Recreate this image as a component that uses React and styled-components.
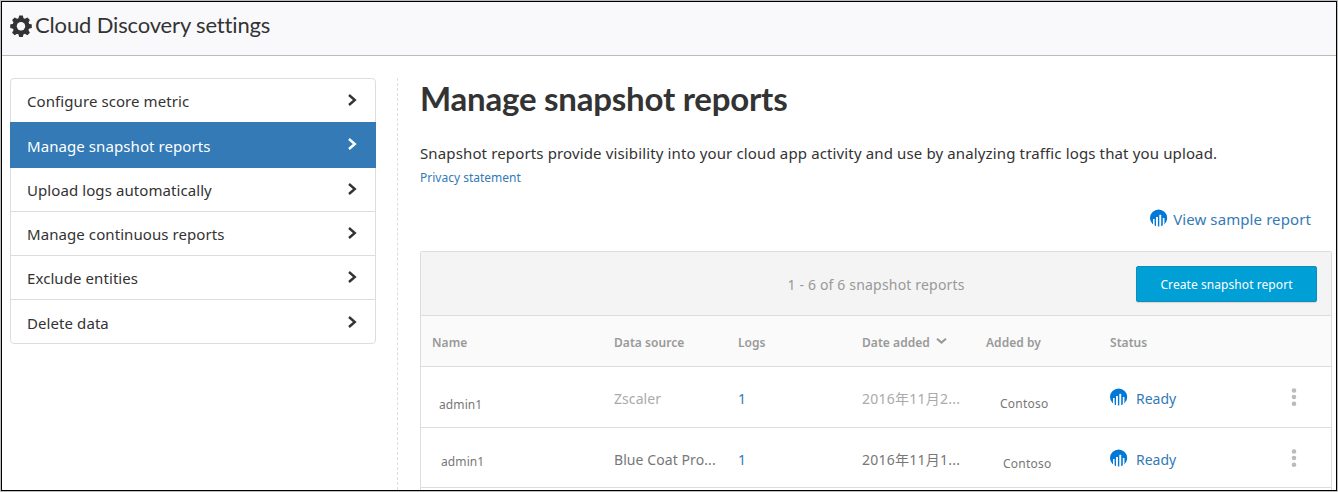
import React from "react";
import styled, { createGlobalStyle } from "styled-components";

const GlobalStyle = createGlobalStyle`
  * { box-sizing: border-box; }
  body { margin: 0; background: #fff; }
`;

const Frame = styled.div`
  width: 1338px;
  height: 492px;
  border: 1px solid #bdbdbd;
  font-family: "Noto Sans", "Noto Sans CJK SC", sans-serif;
  font-size: 15px;
  color: #333;
`;

const Page = styled.div`
  height: 490px;
  border: 1px solid #000;
  overflow: hidden;
  background: #fff;
`;

const Header = styled.header`
  height: 54px;
  display: flex;
  align-items: flex-start;
  padding: 13px 0 0 8px;
  gap: 3px;
  background: #f9f9fc;
  border-bottom: 1px solid #bbb;
`;

const Title = styled.div`
  margin-top: -1px;
  font: 400 22px/22px Lato, sans-serif;
  font-variant-ligatures: none;
  white-space: nowrap;
  letter-spacing: -0.15px;
`;

const Body = styled.div`
  display: flex;
  padding: 22px 4px 0 8px;
  height: 434px;
`;

const Menu = styled.nav`
  width: 366px;
  height: 266px;
  border: 1px solid #ddd;
  border-radius: 4px;
`;

const MenuItem = styled.div`
  display: flex;
  align-items: center;
  justify-content: space-between;
  height: ${(p) => p.$h}px;
  margin: 0 ${(p) => (p.$active ? -1 : 0)}px;
  padding: ${(p) => p.$top || 1}px ${(p) => (p.$active ? 19 : 18)}px 0 ${(p) => (p.$active ? 17 : 16)}px;
  color: ${(p) => (p.$active ? "#fff" : "#333")};
  background: ${(p) => (p.$active ? "#337ab7" : "transparent")};
  border-bottom: ${(p) => (p.$line ? "1px solid #ddd" : "0")};
  line-height: 20px;
  letter-spacing: 0.08px;

  svg { margin-top: -3px; }
`;

const Divider = styled.div`
  width: 1px;
  margin-left: 21px;
  border-left: 1px dashed #ddd;
`;

const Main = styled.main`
  flex: 1;
  margin-left: 22px;
  display: flex;
  flex-direction: column;
`;

const Heading = styled.h1`
  margin: 1px 0 0;
  font: 700 33px/38px Lato, sans-serif;
  letter-spacing: -0.22px;
`;

const Intro = styled.p`
  margin: 26px 0 0;
  line-height: 20px;
  white-space: nowrap;
  letter-spacing: 0.135px;
`;

const Privacy = styled.a`
  margin-top: 6px;
  font-size: 12px;
  line-height: 18px;
  color: #337ab7;
`;

const SampleLink = styled.a`
  display: flex;
  justify-content: flex-end;
  align-items: center;
  gap: 5px;
  margin: 22px 21px 0 0;
  line-height: 20px;
  color: #337ab7;
  letter-spacing: 0.1px;
  svg { margin-top: -2px; }
`;

const Table = styled.section`
  margin-top: 22px;
  border: 1px solid #ddd;
  border-bottom: 0;
  border-radius: 2px 2px 0 0;
  height: 240px;
`;

const Toolbar = styled.div`
  display: grid;
  grid-template-columns: 1fr auto 1fr;
  align-items: center;
  height: 64px;
  padding: 0 14px;
  background: #f4f4f4;
  border-bottom: 1px solid #ddd;
`;

const Count = styled.span`
  grid-column: 2;
  margin-top: 2px;
  font-size: 14px;
  color: #999;
  letter-spacing: 0.18px;
`;

const Button = styled.button`
  justify-self: end;
  width: 181px;
  height: 36px;
  padding: 2px 0 0;
  border: 1px solid #0e8fbb;
  border-radius: 2px;
  background: #00a0d6;
  box-shadow: 0 1px 1px rgba(0, 0, 0, 0.12);
  color: #fff;
  font: 400 12px "Noto Sans", sans-serif;
  letter-spacing: 0.07px;
`;

const Row = styled.div`
  display: grid;
  grid-template-columns: 182px 124px 124px 124px 124px 160px 1fr;
  align-items: center;
  height: ${(p) => p.$h}px;
  padding: ${(p) => p.$top || 0}px 0 0 11px;
  border-bottom: 1px solid #ddd;
  background: ${(p) => (p.$head ? "#fafafa" : "#fff")};
`;

const HeadCell = styled.span`
  display: flex;
  align-items: center;
  gap: 6px;
  font-size: 12px;
  font-weight: 600;
  color: #999;
  white-space: nowrap;
  letter-spacing: 0.05px;
  svg { margin-top: -2px; }
`;

const Cell = styled.span`
  display: flex;
  align-items: center;
  gap: 8px;
  font-size: ${(p) => p.$size || 14}px;
  line-height: 20px;
  color: ${(p) => p.$color || "#777"};
  padding: ${(p) => p.$drop || 0}px 0 0 ${(p) => p.$indent || 0}px;
  white-space: nowrap;
  letter-spacing: ${(p) => p.$ls || 0}px;
  svg { margin-top: -3px; }
`;

const Gear = () => (
  <svg width="22" height="22" viewBox="0 0 22 22">
    <g fill="#333" transform="translate(11 11.3)">
      {[0, 45, 90, 135].map((a) => (
        <path key={a} transform={`rotate(${a})`} d="M-2.8 -7 L-1.8 -10.8 H1.8 L2.8 -7 V7 L1.8 10.8 H-1.8 L-2.8 7Z" />
      ))}
      <circle r="8.4" />
      <circle r="4.2" fill="#f9f9fc" />
    </g>
  </svg>
);

const Chevron = () => (
  <svg width="10" height="12" viewBox="0 0 10 12">
    <path d="M2 1 L7.8 6 L2 11" fill="none" stroke="currentColor" strokeWidth="2.4" />
  </svg>
);

const SortArrow = () => (
  <svg width="11" height="8" viewBox="0 0 11 8">
    <path d="M1 1.8 L5.5 5.6 L10 1.8" fill="none" stroke="#999" strokeWidth="2.1" />
  </svg>
);

const ReportIcon = () => (
  <svg width="18" height="18" viewBox="0 0 18 18">
    <circle cx="8.6" cy="9" r="8.6" fill="#0078d7" />
    <g fill="#fff">
      <rect x="3" y="10" width="1.6" height="8" />
      <rect x="6" y="8" width="1.9" height="10" />
      <rect x="9.3" y="5.8" width="1.9" height="12.2" />
      <rect x="12.8" y="9" width="1.6" height="9" />
    </g>
  </svg>
);

const Dots = () => (
  <svg width="6" height="19" viewBox="0 0 6 19">
    {[2.5, 9, 15.7].map((y) => (
      <circle key={y} cx="3" cy={y} r="2.3" fill="#bbb" />
    ))}
  </svg>
);

const MENU = [
  { text: "Configure score metric", h: 43 },
  { text: "Manage snapshot reports", h: 46, active: true },
  { text: "Upload logs automatically", h: 44, line: true },
  { text: "Manage continuous reports", h: 44, line: true },
  { text: "Exclude entities", h: 44, line: true },
  { text: "Delete data", h: 43, top: 3 },
];

const ROWS = [
  { source: "Zscaler", date: "2016年11月2...", color: "#aaa", h: 61, indent: 7, drop: 12, by: 14, byDrop: 11, top: 3 },
  { source: "Blue Coat Pro...", date: "2016年11月1...", color: "#777", h: 60, indent: 9, drop: 4, by: 17, byDrop: 8, top: 4 },
];

export default function App() {
  return (
    <Frame>
      <GlobalStyle />
      <Page>
        <Header>
          <Gear />
          <Title>Cloud Discovery settings</Title>
        </Header>
        <Body>
          <Menu>
            {MENU.map((m) => (
              <MenuItem key={m.text} $h={m.h} $top={m.top} $active={m.active} $line={m.line}>
                {m.text}
                <Chevron />
              </MenuItem>
            ))}
          </Menu>
          <Divider />
          <Main>
            <Heading>Manage snapshot reports</Heading>
            <Intro>
              Snapshot reports provide visibility into your cloud app activity and use by analyzing traffic logs that you upload.
            </Intro>
            <Privacy>Privacy statement</Privacy>
            <SampleLink>
              <ReportIcon />
              View sample report
            </SampleLink>
            <Table>
              <Toolbar>
                <Count>1 - 6 of 6 snapshot reports</Count>
                <Button>Create snapshot report</Button>
              </Toolbar>
              <Row $head $h={51} $top={2}>
                <HeadCell>Name</HeadCell>
                <HeadCell>Data source</HeadCell>
                <HeadCell>Logs</HeadCell>
                <HeadCell>Date added <SortArrow /></HeadCell>
                <HeadCell>Added by</HeadCell>
                <HeadCell>Status</HeadCell>
              </Row>
              {ROWS.map((r) => (
                <Row key={r.source} $h={r.h} $top={r.top}>
                  <Cell $size={12} $ls={0.1} $indent={r.indent} $drop={r.drop}>admin1</Cell>
                  <Cell $color={r.color} $ls={0.08}>{r.source}</Cell>
                  <Cell $color="#337ab7">1</Cell>
                  <Cell $color={r.color} $ls={0.25}>{r.date}</Cell>
                  <Cell $size={12} $ls={0.25} $indent={r.by} $drop={r.byDrop}>Contoso</Cell>
                  <Cell $color="#337ab7"><ReportIcon />Ready</Cell>
                  <Cell $indent={20.5}><Dots /></Cell>
                </Row>
              ))}
            </Table>
          </Main>
        </Body>
      </Page>
    </Frame>
  );
}
